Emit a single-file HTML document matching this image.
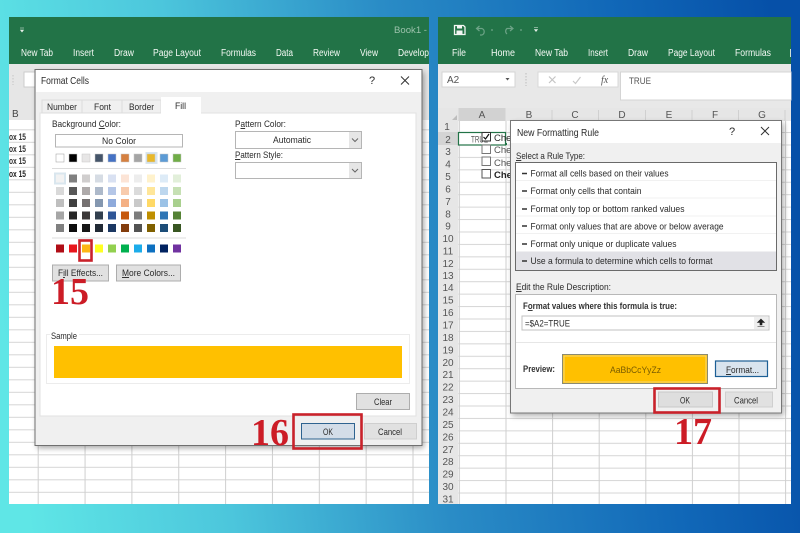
<!DOCTYPE html>
<html><head><meta charset="utf-8"><style>
html,body{margin:0;padding:0;background:#2a8cc6}
svg{display:block}
text{font-family:"Liberation Sans",sans-serif;font-size:9.5px;fill:#2a2a2a}
.w{fill:#f6faf6;font-size:10px}
.n{fill:#555;font-size:10px;text-anchor:middle}
.c{fill:#555;font-size:10px;text-anchor:middle}
.r{font-family:"Liberation Serif",serif;font-weight:bold;font-size:38px;fill:#cc1c28}
.b{fill:#e1e1e1;stroke:#adadad;stroke-width:1}
</style></head><body>
<svg width="800" height="533" viewBox="0 0 800 533" xmlns="http://www.w3.org/2000/svg">
<defs>
<linearGradient id="bg" gradientUnits="userSpaceOnUse" x1="0" y1="320" x2="800" y2="210">
<stop offset="0" stop-color="#5fe6e6"/><stop offset=".25" stop-color="#4cc6dc"/><stop offset=".52" stop-color="#2a8cc6"/><stop offset=".8" stop-color="#1168b8"/><stop offset="1" stop-color="#0650a8"/>
</linearGradient>
<pattern id="gl" patternUnits="userSpaceOnUse" x="37.7" y="4.3" width="46.85" height="12.5"><rect width="46.85" height="12.5" fill="#fff"/><rect y="0" width="46.85" height="1" fill="#d6d6d6"/><rect x="0" width="1" height="12.5" fill="#cfcfcf"/></pattern>
<pattern id="gr" patternUnits="userSpaceOnUse" x="505.5" y="7.74" width="46.6" height="12.43"><rect width="46.6" height="12.43" fill="#fff"/><rect y="0" width="46.6" height="1" fill="#d6d6d6"/><rect x="0" width="1" height="12.43" fill="#cfcfcf"/></pattern>
<filter id="s" x="-10%" y="-10%" width="120%" height="120%"><feGaussianBlur stdDeviation="3"/></filter>
<filter id="soft" x="0" y="0" width="100%" height="100%"><feGaussianBlur stdDeviation="0.35"/></filter>
</defs>
<rect width="800" height="533" fill="url(#bg)"/>
<g filter="url(#soft)">

<!-- LEFT WINDOW -->
<rect x="9" y="17" width="420" height="487" fill="#fff"/>
<rect x="9" y="120" width="420" height="384" fill="url(#gl)"/>
<rect x="9" y="17" width="420" height="47" fill="#217346"/>
<rect x="9" y="64" width="420" height="36" fill="#e6e6e6"/>
<rect x="9" y="100" width="420" height="20" fill="#e6e6e6"/>
<rect x="24" y="72" width="30" height="15" fill="#fff" stroke="#ccc"/>
<path d="M13 75v10" stroke="#c4c4c4" stroke-dasharray="1.500 1.500"/>
<text x="12" y="117" style="font-size:10px;fill:#444">B</text>
<path d="M20 28h4M20.500 30h3l-1.500 2z" fill="#e8f0ea" stroke="#e8f0ea" stroke-width=".6"/>
<text x="394" y="33" style="fill:#9dc2ac;font-size:9.500px" textLength="33" lengthAdjust="spacingAndGlyphs">Book1 -</text>
<text class="w" x="21" y="56" textLength="32" lengthAdjust="spacingAndGlyphs">New Tab</text>
<text class="w" x="73" y="56" textLength="21" lengthAdjust="spacingAndGlyphs">Insert</text>
<text class="w" x="114" y="56" textLength="20" lengthAdjust="spacingAndGlyphs">Draw</text>
<text class="w" x="153" y="56" textLength="48" lengthAdjust="spacingAndGlyphs">Page Layout</text>
<text class="w" x="221" y="56" textLength="35" lengthAdjust="spacingAndGlyphs">Formulas</text>
<text class="w" x="276" y="56" textLength="17" lengthAdjust="spacingAndGlyphs">Data</text>
<text class="w" x="313" y="56" textLength="27" lengthAdjust="spacingAndGlyphs">Review</text>
<text class="w" x="360" y="56" textLength="18" lengthAdjust="spacingAndGlyphs">View</text>
<text class="w" x="398" y="56" textLength="31" lengthAdjust="spacingAndGlyphs">Develop</text>
<text x="9" y="140" style="font-weight:bold;fill:#333" textLength="17" lengthAdjust="spacingAndGlyphs">ox 15</text><text x="9" y="152" style="font-weight:bold;fill:#333" textLength="17" lengthAdjust="spacingAndGlyphs">ox 15</text><text x="9" y="164" style="font-weight:bold;fill:#333" textLength="17" lengthAdjust="spacingAndGlyphs">ox 15</text><text x="9" y="177" style="font-weight:bold;fill:#222" textLength="17" lengthAdjust="spacingAndGlyphs">ox 15</text>

<!-- FORMAT CELLS DIALOG -->
<rect x="37" y="72" width="387" height="376" fill="#000" opacity=".35" filter="url(#s)"/>
<rect x="35" y="69.500" width="387" height="376" fill="#f0f0f0" stroke="#6f6f6f"/>
<rect x="36" y="70" width="385" height="22" fill="#fff"/>
<text x="41" y="84" style="font-size:10.500px" textLength="48" lengthAdjust="spacingAndGlyphs">Format Cells</text>
<text x="369" y="84" style="font-size:11px">?</text>
<path d="M401 76.500l8 8m0-8l-8 8" stroke="#333" fill="none"/>
<rect x="40" y="113" width="376" height="303" fill="#fff" stroke="#e2e2e2"/>
<rect x="42" y="100" width="40" height="13" fill="#f0f0f0" stroke="#dcdcdc"/>
<rect x="82" y="100" width="40" height="13" fill="#f0f0f0" stroke="#dcdcdc"/>
<rect x="122" y="100" width="39" height="13" fill="#f0f0f0" stroke="#dcdcdc"/>
<rect x="161" y="97" width="40" height="17" fill="#fff"/>
<text x="47" y="110" textLength="30" lengthAdjust="spacingAndGlyphs">Number</text>
<text x="94" y="110" textLength="17" lengthAdjust="spacingAndGlyphs">Font</text>
<text x="129" y="110" textLength="25" lengthAdjust="spacingAndGlyphs">Border</text>
<text x="175" y="109" textLength="11" lengthAdjust="spacingAndGlyphs">Fill</text>
<text x="52" y="127" textLength="69" lengthAdjust="spacingAndGlyphs">Background <tspan text-decoration="underline">C</tspan>olor:</text>
<rect x="55.500" y="134.500" width="127" height="12.500" fill="#fff" stroke="#b5b5b5"/>
<text x="102" y="144" textLength="34" lengthAdjust="spacingAndGlyphs">No Color</text>
<text x="235" y="127" textLength="51" lengthAdjust="spacingAndGlyphs">P<tspan text-decoration="underline">a</tspan>ttern Color:</text>
<rect x="235.500" y="131.500" width="126" height="17" fill="#fff" stroke="#b5b5b5"/>
<rect x="349" y="132" width="12" height="16" fill="#e6e6e6"/>
<path d="M352 138.500l3 3 3-3" fill="none" stroke="#666"/>
<text x="273" y="143" textLength="38" lengthAdjust="spacingAndGlyphs">Automatic</text>
<text x="235" y="158" textLength="48" lengthAdjust="spacingAndGlyphs"><tspan text-decoration="underline">P</tspan>attern Style:</text>
<rect x="235.500" y="162.500" width="126" height="16" fill="#fff" stroke="#b5b5b5"/>
<rect x="349" y="163" width="12" height="15" fill="#e6e6e6"/>
<path d="M352 169l3 3 3-3" fill="none" stroke="#666"/>

<!-- theme row -->
<rect x="145.500" y="152" width="12" height="12" fill="#d9e6ee"/>
<g stroke="#c8c8c8" stroke-width=".5">
<rect x="56" y="154" width="8" height="8" fill="#fff" stroke="#999"/>
<rect x="69" y="154" width="8" height="8" fill="#000"/>
<rect x="82" y="154" width="8" height="8" fill="#e7e6e6"/>
<rect x="95" y="154" width="8" height="8" fill="#44546a"/>
<rect x="108" y="154" width="8" height="8" fill="#4472c4"/>
<rect x="121" y="154" width="8" height="8" fill="#d5803f"/>
<rect x="134" y="154" width="8" height="8" fill="#a5a5a5"/>
<rect x="147" y="154" width="8" height="8" fill="#e8b82c"/>
<rect x="160" y="154" width="8" height="8" fill="#5b9bd5"/>
<rect x="173" y="154" width="8" height="8" fill="#70ad47"/>
</g>
<rect x="52" y="168" width="134" height="1" fill="#dcdcdc"/>
<rect x="54" y="172.500" width="12" height="12" fill="#d9e6ee"/>
<g>
<rect x="56" y="174.500" width="8" height="8" fill="#f2f2f2"/><rect x="69" y="174.500" width="8" height="8" fill="#808080"/><rect x="82" y="174.500" width="8" height="8" fill="#d0cece"/><rect x="95" y="174.500" width="8" height="8" fill="#d6dce4"/><rect x="108" y="174.500" width="8" height="8" fill="#d9e1f2"/><rect x="121" y="174.500" width="8" height="8" fill="#fce4d6"/><rect x="134" y="174.500" width="8" height="8" fill="#ededed"/><rect x="147" y="174.500" width="8" height="8" fill="#fff2cc"/><rect x="160" y="174.500" width="8" height="8" fill="#ddebf7"/><rect x="173" y="174.500" width="8" height="8" fill="#e2efda"/>
<rect x="56" y="187" width="8" height="8" fill="#d9d9d9"/><rect x="69" y="187" width="8" height="8" fill="#595959"/><rect x="82" y="187" width="8" height="8" fill="#aeaaaa"/><rect x="95" y="187" width="8" height="8" fill="#adb9ca"/><rect x="108" y="187" width="8" height="8" fill="#b4c6e7"/><rect x="121" y="187" width="8" height="8" fill="#f8cbad"/><rect x="134" y="187" width="8" height="8" fill="#dbdbdb"/><rect x="147" y="187" width="8" height="8" fill="#ffe699"/><rect x="160" y="187" width="8" height="8" fill="#bdd7ee"/><rect x="173" y="187" width="8" height="8" fill="#c6e0b4"/>
<rect x="56" y="199" width="8" height="8" fill="#bfbfbf"/><rect x="69" y="199" width="8" height="8" fill="#404040"/><rect x="82" y="199" width="8" height="8" fill="#757171"/><rect x="95" y="199" width="8" height="8" fill="#8497b0"/><rect x="108" y="199" width="8" height="8" fill="#8eaadb"/><rect x="121" y="199" width="8" height="8" fill="#f4b084"/><rect x="134" y="199" width="8" height="8" fill="#c9c9c9"/><rect x="147" y="199" width="8" height="8" fill="#ffd966"/><rect x="160" y="199" width="8" height="8" fill="#9bc2e6"/><rect x="173" y="199" width="8" height="8" fill="#a9d08e"/>
<rect x="56" y="211.500" width="8" height="8" fill="#a6a6a6"/><rect x="69" y="211.500" width="8" height="8" fill="#262626"/><rect x="82" y="211.500" width="8" height="8" fill="#3b3838"/><rect x="95" y="211.500" width="8" height="8" fill="#333f4f"/><rect x="108" y="211.500" width="8" height="8" fill="#2f5496"/><rect x="121" y="211.500" width="8" height="8" fill="#c65911"/><rect x="134" y="211.500" width="8" height="8" fill="#7b7b7b"/><rect x="147" y="211.500" width="8" height="8" fill="#bf8f00"/><rect x="160" y="211.500" width="8" height="8" fill="#2f75b5"/><rect x="173" y="211.500" width="8" height="8" fill="#548235"/>
<rect x="56" y="224" width="8" height="8" fill="#808080"/><rect x="69" y="224" width="8" height="8" fill="#0d0d0d"/><rect x="82" y="224" width="8" height="8" fill="#171616"/><rect x="95" y="224" width="8" height="8" fill="#222b35"/><rect x="108" y="224" width="8" height="8" fill="#1f3864"/><rect x="121" y="224" width="8" height="8" fill="#833c0b"/><rect x="134" y="224" width="8" height="8" fill="#525252"/><rect x="147" y="224" width="8" height="8" fill="#806000"/><rect x="160" y="224" width="8" height="8" fill="#1f4e78"/><rect x="173" y="224" width="8" height="8" fill="#375623"/>
</g>
<rect x="52" y="237.500" width="134" height="1" fill="#dcdcdc"/>
<rect x="56" y="244.500" width="8" height="8" fill="#b00d12"/><rect x="69" y="244.500" width="8" height="8" fill="#e8181c"/><rect x="82" y="244.500" width="8" height="8" fill="#fdb614"/><rect x="95" y="244.500" width="8" height="8" fill="#ffff20"/><rect x="108" y="244.500" width="8" height="8" fill="#92d050"/><rect x="121" y="244.500" width="8" height="8" fill="#00b050"/><rect x="134" y="244.500" width="8" height="8" fill="#1cacea"/><rect x="147" y="244.500" width="8" height="8" fill="#0f70c0"/><rect x="160" y="244.500" width="8" height="8" fill="#002060"/><rect x="173" y="244.500" width="8" height="8" fill="#7030a0"/>
<rect x="79.500" y="240.500" width="12" height="20" fill="none" stroke="#c9202c" stroke-width="2.600"/>
<rect x="52.500" y="265" width="56" height="16" class="b"/>
<text x="58" y="276" textLength="45" lengthAdjust="spacingAndGlyphs">F<tspan text-decoration="underline">i</tspan>ll Effects...</text>
<rect x="116.500" y="265" width="64" height="16" class="b"/>
<text x="122" y="276" textLength="53" lengthAdjust="spacingAndGlyphs"><tspan text-decoration="underline">M</tspan>ore Colors...</text>
<text class="r" x="51" y="304">15</text>

<rect x="46.500" y="334.500" width="363" height="49" fill="#fff" stroke="#ececec"/>
<rect x="50" y="332" width="29" height="8" fill="#fff"/>
<text x="51" y="339" textLength="26" lengthAdjust="spacingAndGlyphs">Sample</text>
<rect x="54" y="346" width="348" height="32" fill="#ffc000"/>
<rect x="356.500" y="393.500" width="53" height="16" class="b"/>
<text x="374" y="405" textLength="18" lengthAdjust="spacingAndGlyphs">Clear</text>
<rect x="301.500" y="423.500" width="53" height="15.500" fill="#d3dde8" stroke="#2f6490" stroke-width="1"/>
<text x="323" y="435" textLength="10" lengthAdjust="spacingAndGlyphs">OK</text>
<rect x="364.500" y="423.500" width="52" height="15.500" fill="#e1e1e1" stroke="#cfcfcf"/>
<text x="378" y="435" textLength="24" lengthAdjust="spacingAndGlyphs">Cancel</text>
<rect x="293.500" y="414.500" width="68" height="34" fill="none" stroke="#c9202c" stroke-width="2.600"/>
<text class="r" x="251" y="445">16</text>

<!-- RIGHT WINDOW -->
<rect x="438" y="17" width="353" height="487" fill="#fff"/>
<rect x="458.500" y="121" width="332.500" height="383" fill="url(#gr)"/>
<rect x="438" y="17" width="353" height="47" fill="#217346"/>
<rect x="438" y="64" width="353" height="44" fill="#e8e8e8"/>
<rect x="438" y="108" width="353" height="13" fill="#e6e6e6"/>
<rect x="438" y="121" width="20.500" height="383" fill="#e6e6e6"/>
<!-- save icon -->
<path d="M454.500 25.500h9l1.500 1.500v7.500h-10.500z" fill="none" stroke="#f2f6f3" stroke-width="1.300"/>
<rect x="457" y="25.500" width="5" height="3" fill="#f2f6f3"/><rect x="456.500" y="30.500" width="6" height="3.500" fill="#f2f6f3"/>
<path d="M477 28.500h5a3.500 3.500 0 0 1 0 6.500h-2M479.500 26l-3 2.500 3 2.500" fill="none" stroke="#6da387" stroke-width="1.200"/>
<path d="M491 30h2M507 34a3.500 3.500 0 0 1 0-5.500h5M510 26l3 2.500-3 2.500M520 30h2" fill="none" stroke="#6da387" stroke-width="1.200"/>
<path d="M534 27.500h4M534.500 29.500h3l-1.500 2z" fill="#e8f0ea" stroke="#e8f0ea" stroke-width=".6"/>
<text class="w" x="452" y="56" textLength="14" lengthAdjust="spacingAndGlyphs">File</text>
<text class="w" x="491" y="56" textLength="24" lengthAdjust="spacingAndGlyphs">Home</text>
<text class="w" x="535" y="56" textLength="33" lengthAdjust="spacingAndGlyphs">New Tab</text>
<text class="w" x="588" y="56" textLength="20" lengthAdjust="spacingAndGlyphs">Insert</text>
<text class="w" x="628" y="56" textLength="20" lengthAdjust="spacingAndGlyphs">Draw</text>
<text class="w" x="668" y="56" textLength="47" lengthAdjust="spacingAndGlyphs">Page Layout</text>
<text class="w" x="735" y="56" textLength="36" lengthAdjust="spacingAndGlyphs">Formulas</text>
<rect x="790" y="49" width="1" height="8" fill="#cfe0d6"/>
<rect x="442" y="72" width="73" height="15" fill="#fff" stroke="#d4d4d4"/>
<text x="447" y="83" style="font-size:10px;fill:#555">A2</text>
<path d="M505.500 78h4l-2 2.500z" fill="#555"/>
<path d="M526 73v13" stroke="#bbb" stroke-dasharray="1.500 1.500"/>
<rect x="538" y="72" width="80" height="15" fill="#fff" stroke="#d8d8d8"/>
<path d="M549 76.500l6.500 6.500m0-6.500l-6.500 6.500" stroke="#c4c4c4" stroke-width="1.200"/>
<path d="M573 81l2.500 2.500 5-6.500" stroke="#c8c8c8" stroke-width="1.200" fill="none"/>
<text x="601" y="83" style="font-family:'Liberation Serif',serif;font-style:italic;font-size:10px;fill:#555">fx</text>
<rect x="620.500" y="72" width="171" height="28" fill="#fff" stroke="#d4d4d4"/>
<text x="629" y="84" style="font-size:9.500px;fill:#555" textLength="22" lengthAdjust="spacingAndGlyphs">TRUE</text>
<path d="M452 120l5-5v5z" fill="#bdbdbd"/>
<rect x="458.500" y="108" width="47" height="13" fill="#d2d2d2"/>
<path d="M552 110v11M598.500 110v11M645.500 110v11M692 110v11M738.500 110v11M785 110v11" stroke="#d0d0d0"/>
<text class="c" x="482" y="118">A</text><text class="c" x="529" y="118">B</text><text class="c" x="575" y="118">C</text><text class="c" x="622" y="118">D</text><text class="c" x="669" y="118">E</text><text class="c" x="715" y="118">F</text><text class="c" x="762" y="118">G</text>
<rect x="438" y="132" width="20.500" height="13" fill="#d4d4d4"/>
<g>
<text class="n" x="447" y="130">1</text><text class="n" x="448" y="142.800">2</text><text class="n" x="448" y="155">3</text><text class="n" x="448" y="167.500">4</text><text class="n" x="448" y="180">5</text><text class="n" x="448" y="192.400">6</text><text class="n" x="448" y="204.800">7</text><text class="n" x="448" y="217.300">8</text><text class="n" x="448" y="229.700">9</text><text class="n" x="448" y="242.100">10</text><text class="n" x="448" y="254.600">11</text><text class="n" x="448" y="267">12</text><text class="n" x="448" y="278.800">13</text><text class="n" x="448" y="291.200">14</text><text class="n" x="448" y="303.600">15</text><text class="n" x="448" y="316">16</text><text class="n" x="448" y="328.500">17</text><text class="n" x="448" y="340.900">18</text><text class="n" x="448" y="353.300">19</text><text class="n" x="448" y="365.800">20</text><text class="n" x="448" y="378.200">21</text><text class="n" x="448" y="390.600">22</text><text class="n" x="448" y="403">23</text><text class="n" x="448" y="415.500">24</text><text class="n" x="448" y="427.900">25</text><text class="n" x="448" y="440.300">26</text><text class="n" x="448" y="452.800">27</text><text class="n" x="448" y="465.200">28</text><text class="n" x="448" y="477.600">29</text><text class="n" x="448" y="490">30</text><text class="n" x="448" y="502.500">31</text>
</g>
<rect x="458.500" y="132.500" width="47" height="12.500" fill="#fff" stroke="#217346" stroke-width="1.200"/>
<text x="471" y="142.500" style="font-size:9.500px;fill:#555" textLength="17" lengthAdjust="spacingAndGlyphs">TRUE</text>
<rect x="482" y="132.500" width="8.500" height="8.500" fill="#fff" stroke="#333"/>
<path d="M483.500 137l2 2 3.500-5" fill="none" stroke="#111" stroke-width="1.200"/>
<rect x="482" y="145" width="8.500" height="8.500" fill="#fff" stroke="#777"/>
<rect x="482" y="157" width="8.500" height="8.500" fill="#fff" stroke="#777"/>
<rect x="482" y="169.500" width="8.500" height="8.500" fill="#fff" stroke="#555"/>
<text x="494" y="141">Chec</text><text x="494" y="153" style="fill:#555">Chec</text><text x="494" y="166" style="fill:#555">Chec</text><text x="494" y="178" style="font-weight:bold;fill:#222">Chec</text>
<rect x="505" y="143" width="2" height="2" fill="#217346"/>

<!-- NEW FORMATTING RULE DIALOG -->
<rect x="512" y="123" width="272" height="293" fill="#000" opacity=".3" filter="url(#s)"/>
<rect x="510.500" y="120.500" width="271" height="292.500" fill="#f0f0f0" stroke="#777"/>
<rect x="511" y="121" width="270" height="22" fill="#fff"/>
<text x="517" y="136" style="font-size:10.500px" textLength="82" lengthAdjust="spacingAndGlyphs">New Formatting Rule</text>
<text x="729" y="135" style="font-size:11px">?</text>
<path d="M761 127l8 8m0-8l-8 8" stroke="#333" fill="none"/>
<text x="516" y="159" textLength="69" lengthAdjust="spacingAndGlyphs"><tspan text-decoration="underline">S</tspan>elect a Rule Type:</text>
<rect x="515.500" y="162.500" width="261" height="108" fill="#fff" stroke="#6b6b6b" stroke-width="1"/>
<rect x="516" y="251.500" width="260" height="18.500" fill="#e1e1e6"/>
<path d="M516 180.500h260M516 198h260M516 216h260M516 233.500h260" stroke="#f1f1f1"/>
<path d="M522 173.500h5M522 191h5M522 209h5M522 226h5M522 244h5M522 261h5" stroke="#333" stroke-width="1.400"/>
<text x="530.500" y="176.500" textLength="138" lengthAdjust="spacingAndGlyphs">Format all cells based on their values</text>
<text x="530.500" y="194" textLength="111" lengthAdjust="spacingAndGlyphs">Format only cells that contain</text>
<text x="530.500" y="212" textLength="154" lengthAdjust="spacingAndGlyphs">Format only top or bottom ranked values</text>
<text x="530.500" y="229.500" textLength="193" lengthAdjust="spacingAndGlyphs">Format only values that are above or below average</text>
<text x="530.500" y="247" textLength="146" lengthAdjust="spacingAndGlyphs">Format only unique or duplicate values</text>
<text x="530.500" y="264" textLength="182" lengthAdjust="spacingAndGlyphs">Use a formula to determine which cells to format</text>
<text x="516" y="290" textLength="95" lengthAdjust="spacingAndGlyphs"><tspan text-decoration="underline">E</tspan>dit the Rule Description:</text>
<rect x="515.500" y="294.500" width="261" height="94" fill="#fff" stroke="#b8b8b8"/>
<text x="523" y="309" style="font-weight:bold;fill:#333" textLength="154" lengthAdjust="spacingAndGlyphs">F<tspan text-decoration="underline">o</tspan>rmat values where this formula is true:</text>
<rect x="522" y="316" width="247" height="14" fill="#fff" stroke="#c0c0c0"/>
<text x="525" y="326.500" textLength="45" lengthAdjust="spacingAndGlyphs">=$A2=TRUE</text>
<rect x="754" y="317" width="14" height="12" fill="#eee"/>
<path d="M761 319l-3.500 3.500h2.500v2.500h2v-2.500h2.500zM757.500 326.500h7" fill="#222" stroke="#222" stroke-width=".6"/>
<rect x="516" y="342" width="260" height="1" fill="#e6e6e6"/>
<text x="523" y="372" style="font-weight:bold;fill:#333" textLength="32" lengthAdjust="spacingAndGlyphs">Preview:</text>
<rect x="562.500" y="354.500" width="145" height="29" fill="#ffc000" stroke="#8a8a70"/>
<rect x="564" y="356" width="142" height="26" fill="none" stroke="#f5d878"/>
<text x="610" y="373" style="font-size:9.500px;fill:#7a5c00" textLength="51" lengthAdjust="spacingAndGlyphs">AaBbCcYyZz</text>
<rect x="715.500" y="361" width="52" height="15.500" fill="#d9e4ee" stroke="#1f5f95" stroke-width="1.200"/>
<text x="726" y="373" textLength="33" lengthAdjust="spacingAndGlyphs"><tspan text-decoration="underline">F</tspan>ormat...</text>
<rect x="658.500" y="392" width="54" height="15" fill="#dedede" stroke="#c8c8c8"/>
<text x="680" y="403.500" textLength="10" lengthAdjust="spacingAndGlyphs">OK</text>
<rect x="725.500" y="392" width="47" height="15" fill="#e1e1e1" stroke="#cfcfcf"/>
<text x="734" y="403.500" textLength="24" lengthAdjust="spacingAndGlyphs">Cancel</text>
<rect x="654.500" y="388.500" width="65" height="24" fill="none" stroke="#c9202c" stroke-width="2.600"/>
<text class="r" x="674" y="444">17</text>
</g>
</svg>
</body></html>
